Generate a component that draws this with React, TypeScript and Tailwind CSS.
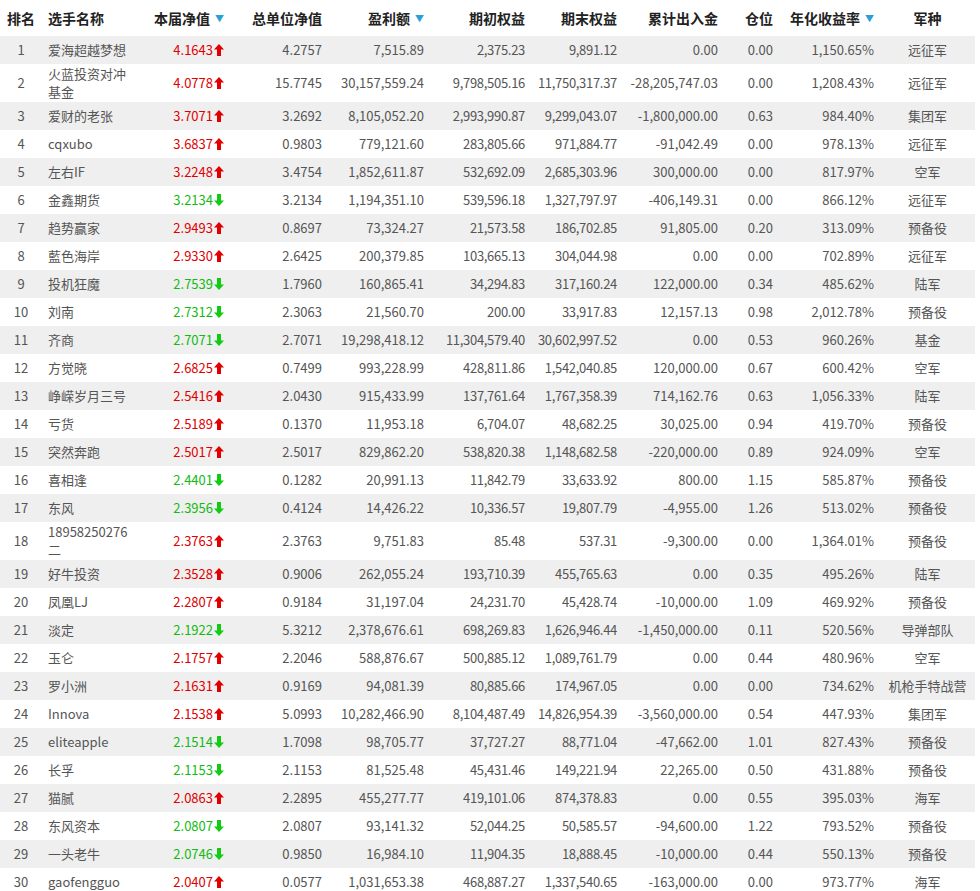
const rows: [string, string, string, boolean, string, string, string, string, string, string, string, string][] = [
["1","爱海超越梦想","4.1643",true,"4.2757","7,515.89","2,375.23","9,891.12","0.00","0.00","1,150.65%","远征军"],
["2","火蓝投资对冲基金","4.0778",true,"15.7745","30,157,559.24","9,798,505.16","11,750,317.37","-28,205,747.03","0.00","1,208.43%","远征军"],
["3","爱财的老张","3.7071",true,"3.2692","8,105,052.20","2,993,990.87","9,299,043.07","-1,800,000.00","0.63","984.40%","集团军"],
["4","cqxubo","3.6837",true,"0.9803","779,121.60","283,805.66","971,884.77","-91,042.49","0.00","978.13%","远征军"],
["5","左右IF","3.2248",true,"3.4754","1,852,611.87","532,692.09","2,685,303.96","300,000.00","0.00","817.97%","空军"],
["6","金鑫期货","3.2134",false,"3.2134","1,194,351.10","539,596.18","1,327,797.97","-406,149.31","0.00","866.12%","远征军"],
["7","趋势赢家","2.9493",true,"0.8697","73,324.27","21,573.58","186,702.85","91,805.00","0.20","313.09%","预备役"],
["8","藍色海岸","2.9330",true,"2.6425","200,379.85","103,665.13","304,044.98","0.00","0.00","702.89%","远征军"],
["9","投机狂魔","2.7539",false,"1.7960","160,865.41","34,294.83","317,160.24","122,000.00","0.34","485.62%","陆军"],
["10","刘南","2.7312",false,"2.3063","21,560.70","200.00","33,917.83","12,157.13","0.98","2,012.78%","预备役"],
["11","齐商","2.7071",false,"2.7071","19,298,418.12","11,304,579.40","30,602,997.52","0.00","0.53","960.26%","基金"],
["12","方觉晓","2.6825",true,"0.7499","993,228.99","428,811.86","1,542,040.85","120,000.00","0.67","600.42%","空军"],
["13","峥嵘岁月三号","2.5416",true,"2.0430","915,433.99","137,761.64","1,767,358.39","714,162.76","0.63","1,056.33%","陆军"],
["14","亏货","2.5189",true,"0.1370","11,953.18","6,704.07","48,682.25","30,025.00","0.94","419.70%","预备役"],
["15","突然奔跑","2.5017",true,"2.5017","829,862.20","538,820.38","1,148,682.58","-220,000.00","0.89","924.09%","空军"],
["16","喜相逢","2.4401",false,"0.1282","20,991.13","11,842.79","33,633.92","800.00","1.15","585.87%","预备役"],
["17","东风","2.3956",false,"0.4124","14,426.22","10,336.57","19,807.79","-4,955.00","1.26","513.02%","预备役"],
["18","18958250276二","2.3763",true,"2.3763","9,751.83","85.48","537.31","-9,300.00","0.00","1,364.01%","预备役"],
["19","好牛投资","2.3528",true,"0.9006","262,055.24","193,710.39","455,765.63","0.00","0.35","495.26%","陆军"],
["20","凤凰LJ","2.2807",true,"0.9184","31,197.04","24,231.70","45,428.74","-10,000.00","1.09","469.92%","预备役"],
["21","淡定","2.1922",false,"5.3212","2,378,676.61","698,269.83","1,626,946.44","-1,450,000.00","0.11","520.56%","导弹部队"],
["22","玉仑","2.1757",true,"2.2046","588,876.67","500,885.12","1,089,761.79","0.00","0.44","480.96%","空军"],
["23","罗小洲","2.1631",true,"0.9169","94,081.39","80,885.66","174,967.05","0.00","0.00","734.62%","机枪手特战营"],
["24","Innova","2.1538",true,"5.0993","10,282,466.90","8,104,487.49","14,826,954.39","-3,560,000.00","0.54","447.93%","集团军"],
["25","eliteapple","2.1514",false,"1.7098","98,705.77","37,727.27","88,771.04","-47,662.00","1.01","827.43%","预备役"],
["26","长孚","2.1153",false,"2.1153","81,525.48","45,431.46","149,221.94","22,265.00","0.50","431.88%","预备役"],
["27","猫腻","2.0863",true,"2.2895","455,277.77","419,101.06","874,378.83","0.00","0.55","395.03%","海军"],
["28","东风资本","2.0807",false,"2.0807","93,141.32","52,044.25","50,585.57","-94,600.00","1.22","793.52%","预备役"],
["29","一头老牛","2.0746",false,"0.9850","16,984.10","11,904.35","18,888.45","-10,000.00","0.44","550.13%","预备役"],
["30","gaofengguo","2.0407",true,"0.0577","1,031,653.38","468,887.27","1,337,540.65","-163,000.00","0.00","973.77%","海军"],
];

const Tri = () => <span className="inline-block ml-[5px] text-[#2a9fd6] text-[9px] align-[2px]">▼</span>;

function Arrow({ up }: { up: boolean }) {
  return (
    <svg width="10" height="12" viewBox="0 0 10 12" className="inline-block ml-[1px] align-[-1px]">
      {up ? <path d="M5 0 L10 5.5 L7 5.5 L7 12 L3 12 L3 5.5 L0 5.5 Z" fill="#e00000" /> : <path d="M5 12 L10 6.5 L7 6.5 L7 0 L3 0 L3 6.5 L0 6.5 Z" fill="#11cc11" />}
    </svg>
  );
}

export default function App() {
  const font = { fontFamily: '"Noto Sans CJK SC", "Liberation Sans", sans-serif' };
  return (
    <div className="w-[980px] bg-white text-[13px] text-[#555]" style={font}>
      <table className="w-[975px] border-collapse table-fixed">
        <colgroup>
          <col className="w-[42px]" /><col className="w-[104px]" /><col className="w-[84px]" /><col className="w-[100px]" />
          <col className="w-[100px]" /><col className="w-[101px]" /><col className="w-[92px]" /><col className="w-[101px]" />
          <col className="w-[56px]" /><col className="w-[100px]" /><col className="w-[95px]" />
        </colgroup>
        <thead>
          <tr className="h-[36px] text-[14px] font-bold text-[#222]">
            <th className="text-center">排名</th>
            <th className="text-left pl-[6px]">选手名称</th>
            <th className="text-right pr-[6px] whitespace-nowrap">本届净值<Tri /></th>
            <th className="text-right pr-[8px] whitespace-nowrap">总单位净值</th>
            <th className="text-right pr-[6px] whitespace-nowrap">盈利额<Tri /></th>
            <th className="text-right pr-[6px]">期初权益</th>
            <th className="text-right pr-[6px]">期末权益</th>
            <th className="text-right pr-[6px] whitespace-nowrap">累计出入金</th>
            <th className="text-right pr-[7px]">仓位</th>
            <th className="text-right pr-[6px] whitespace-nowrap">年化收益率<Tri /></th>
            <th className="text-center">军种</th>
          </tr>
        </thead>
        <tbody>
          {rows.map((r, i) => (
            <tr key={i} className={(i % 2 === 0 ? "bg-[#efefef] " : "") + "h-[28px] leading-[18px]"}>
              <td className="text-center">{r[0]}</td>
              <td className="text-left pl-[6px] pr-[10px] py-[1px] break-all">{r[1]}</td>
              <td className={"text-right pr-[6px] whitespace-nowrap " + (r[3] ? "text-[#e00000]" : "text-[#11bb11]")}>{r[2]}<Arrow up={r[3]} /></td>
              <td className="text-right pr-[8px]">{r[4]}</td>
              <td className="text-right pr-[6px] whitespace-nowrap">{r[5]}</td>
              <td className="text-right pr-[6px] whitespace-nowrap tracking-[-0.3px]">{r[6]}</td>
              <td className="text-right pr-[6px] whitespace-nowrap tracking-[-0.3px]">{r[7]}</td>
              <td className="text-right pr-[6px] whitespace-nowrap">{r[8]}</td>
              <td className="text-right pr-[7px]">{r[9]}</td>
              <td className="text-right pr-[6px]">{r[10]}</td>
              <td className="text-center whitespace-nowrap">{r[11]}</td>
            </tr>
          ))}
        </tbody>
      </table>
    </div>
  );
}
